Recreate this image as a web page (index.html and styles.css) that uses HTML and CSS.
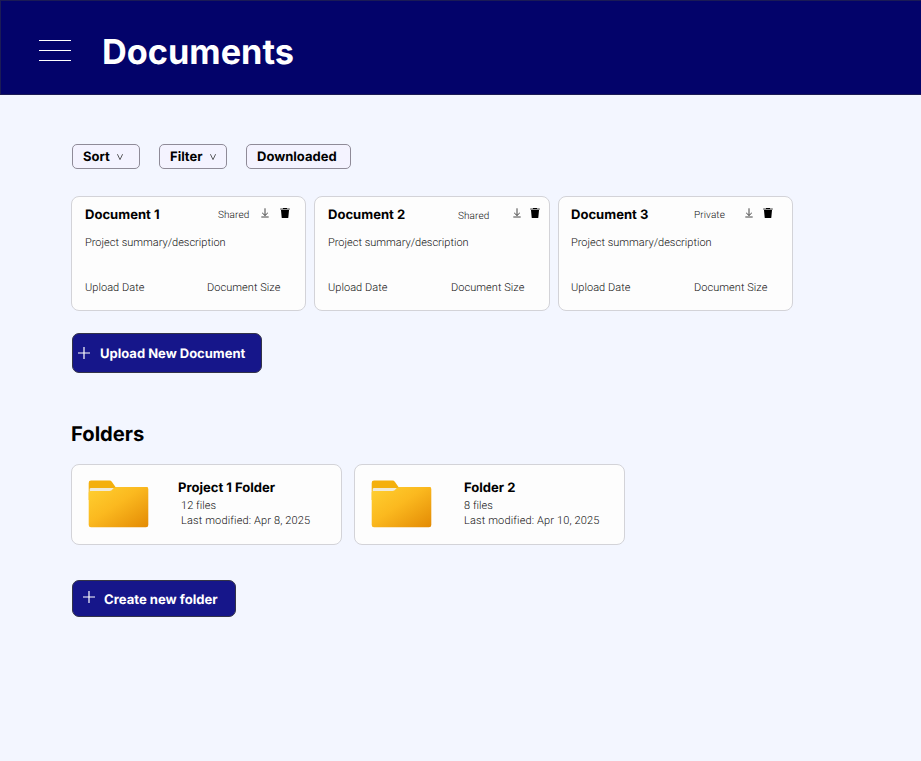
FILE: index.html
```html
<!DOCTYPE html>
<html lang="en">
<head>
<meta charset="utf-8">
<title>Documents</title>
<link rel="stylesheet" href="styles.css">
</head>
<body>
<svg class="defs" width="0" height="0" aria-hidden="true">
  <defs>
    <linearGradient id="front" x1="0" y1="0" x2="1" y2="1">
      <stop offset="0" stop-color="#ffd031"/>
      <stop offset="0.45" stop-color="#fbb91f"/>
      <stop offset="1" stop-color="#e38a04"/>
    </linearGradient>
    <symbol id="folder" viewBox="0 0 60 48">
      <path d="M2.500 .6H21Q22.500 .6 23.500 2L27 7H58Q59.500 7 59.500 9V20H.2V3Q.2 .6 2.500 .6Z" fill="#f4b00c"/>
      <path d="M1.200 9Q1.200 8 2.500 8H26.500L24 12H1.200Z" fill="#f0ead8"/>
      <path d="M.2 12.600Q.2 11 2 11H21C24 11 24.500 7 28 7H58Q59.800 7 59.800 9V45Q59.800 47.300 57.500 47.300H2.500Q.2 47.300 .2 45Z" fill="url(#front)"/>
    </symbol>
    <symbol id="download" viewBox="0 0 8 10">
      <path d="M4 .3V7.500M1.200 4.900L4 7.500L6.800 4.900M.3 9H7.700" fill="none" stroke="#444" stroke-width="1"/>
    </symbol>
    <symbol id="trash" viewBox="0 0 10 10">
      <path d="M.2 .3H9.800V1.800H.2Z" fill="#777"/>
      <path d="M3 0H7V1H3Z" fill="#000"/>
      <path d="M1 2H9L8.300 9.500Q8.200 10 7.700 10H2.300Q1.800 10 1.700 9.500Z" fill="#000"/>
    </symbol>
    <symbol id="plus" viewBox="0 0 12 12">
      <path d="M6 0V12M0 6H12" stroke="#fff" stroke-width="1.200" fill="none"/>
    </symbol>
    <symbol id="chevron" viewBox="0 0 6 6">
      <path d="M.4 .2L3 5.600L5.600 .2" stroke="#333" stroke-width="0.800" fill="none"/>
    </symbol>
  </defs>
</svg>
<header class="topbar">
  <div class="menu"><span></span><span></span><span></span></div>
  <h1>Documents</h1>
</header>
<main>
  <div class="filters">
    <button class="chip chip-menu">Sort<svg class="chevron"><use href="#chevron"/></svg></button>
    <button class="chip chip-menu">Filter<svg class="chevron"><use href="#chevron"/></svg></button>
    <button class="chip chip-wide">Downloaded</button>
  </div>
  <section class="documents">
    <article class="doc doc-one">
      <div class="doc-head"><h3>Document 1</h3><span class="access">Shared</span><svg class="download"><use href="#download"/></svg><svg class="trash"><use href="#trash"/></svg></div>
      <p class="small summary">Project summary/description</p>
      <div class="doc-foot small"><span>Upload Date</span><span>Document Size</span></div>
    </article>
    <article class="doc doc-two">
      <div class="doc-head"><h3>Document 2</h3><span class="access">Shared</span><svg class="download"><use href="#download"/></svg><svg class="trash"><use href="#trash"/></svg></div>
      <p class="small summary">Project summary/description</p>
      <div class="doc-foot small"><span>Upload Date</span><span>Document Size</span></div>
    </article>
    <article class="doc doc-three">
      <div class="doc-head"><h3>Document 3</h3><span class="access">Private</span><svg class="download"><use href="#download"/></svg><svg class="trash"><use href="#trash"/></svg></div>
      <p class="small summary">Project summary/description</p>
      <div class="doc-foot small"><span>Upload Date</span><span>Document Size</span></div>
    </article>
  </section>
  <button class="action upload"><svg class="plus"><use href="#plus"/></svg><span>Upload New Document</span></button>
  <h2>Folders</h2>
  <section class="folders">
    <article class="folder folder-one">
      <svg class="folder-icon"><use href="#folder"/></svg>
      <div class="folder-text"><h3>Project 1 Folder</h3><p class="small">12 files</p><p class="small modified">Last modified: Apr 8, 2025</p></div>
    </article>
    <article class="folder folder-two">
      <svg class="folder-icon"><use href="#folder"/></svg>
      <div class="folder-text"><h3>Folder 2</h3><p class="small">8 files</p><p class="small modified">Last modified: Apr 10, 2025</p></div>
    </article>
  </section>
  <button class="action create"><svg class="plus"><use href="#plus"/></svg><span>Create new folder</span></button>
</main>
</body>
</html>
```
FILE: styles.css
```css
* { box-sizing: border-box; }
body { margin: 0; min-height: 761px; background: #f3f6ff; color: #000; font-family: Inter, sans-serif; text-rendering: geometricPrecision; }
h1, h2, h3, p { margin: 0; white-space: nowrap; }
svg { display: block; flex: none; }
.defs { position: absolute; }
button { font-family: inherit; margin: 0; white-space: nowrap; text-rendering: inherit; }

.topbar { display: flex; height: 95px; padding: 0 0 0 38px; background: #03036a; border: 1px solid #1b1b55; border-right: 0; }
.menu { width: 32px; padding-top: 39px; display: flex; flex-direction: column; gap: 9px; }
.menu span { height: 1px; background: #fff; }
h1 { margin: 30px 0 0 31px; font-size: 34.300px; line-height: 44px; font-weight: 700; color: #fff; }

main { padding: 49px 0 0 71px; }
.filters { display: flex; gap: 19px; padding-left: 1px; }
.chip { height: 25px; display: flex; align-items: center; padding: 2px 0 0 10px; border: 1px solid #8f8b98; border-radius: 5px; background: #f4f3ff; font-size: 13px; line-height: 17px; font-weight: 700; color: #000; }
.chip-menu { width: 68px; }
.chip-wide { width: 105px; }
.chevron { width: 6px; height: 6px; margin: 0 0 1px 7px; }

.documents { display: grid; grid-template-columns: 235px 236px 235px; column-gap: 8px; margin-top: 27px; }
.doc, .folder { background: #fdfdfd; border: 1px solid #d3d3d8; border-radius: 8px; }
.doc { height: 115px; padding: 9px 0 0 13px; }
.doc-three { padding-left: 12px; }
.doc-head { display: grid; height: 18px; }
.doc-one .doc-head { grid-template-columns: 133px 43px 19px 10px; }
.doc-two .doc-head { grid-template-columns: 130px 55px 17px 10px; }
.doc-three .doc-head { grid-template-columns: 123px 51px 18px 10px; }
h3 { font-size: 13.050px; line-height: 18px; font-weight: 700; }
.access { padding-top: 1px; font: 300 10px/18px Roboto, sans-serif; letter-spacing: 0.100px; color: #111; }
.doc-two .access { padding-top: 2px; }
.download { width: 8px; height: 10px; margin-top: 2px; }
.trash { width: 10px; height: 10px; margin-top: 2px; }
.small { font: 300 11px/16px Roboto, sans-serif; letter-spacing: 0.050px; color: #111; }
.summary { margin-top: 11px; letter-spacing: 0; }
.doc-foot { display: grid; grid-template-columns: 123px 1fr; margin-top: 29px; }
.doc-one .doc-foot { grid-template-columns: 122px 1fr; }

.action { display: flex; align-items: center; padding: 0; border: 1px solid #333348; border-radius: 7px; background: #16168a; color: #fff; font-size: 13px; font-weight: 700; }
.plus { width: 12px; height: 12px; }
.upload { width: 190px; height: 40px; margin: 22px 0 0 1px; padding-left: 5px; gap: 10px; }
.upload span { margin-top: 2px; }
.create { width: 164px; height: 37px; margin: 35px 0 0 1px; padding-left: 10px; gap: 9px; font-size: 13.100px; }
.create .plus { margin-bottom: 3px; }
.create span { margin-top: 3px; }

h2 { margin-top: 48px; font-size: 20.200px; line-height: 26px; font-weight: 700; }
.folders { display: grid; grid-template-columns: 271px 271px; column-gap: 12px; margin-top: 17px; }
.folder { display: flex; height: 81px; padding: 15px 0 0 16px; }
.folder-icon { width: 61px; height: 48px; }
.folder-text { margin: -1px 0 0 29px; }
.folder-two .folder-text { margin-left: 32px; }
.folder-one .small { padding-left: 3px; }
.folder-text h3 + .small { margin-top: 1px; }
.small.modified { margin-top: -1px; letter-spacing: 0.140px; }
```
